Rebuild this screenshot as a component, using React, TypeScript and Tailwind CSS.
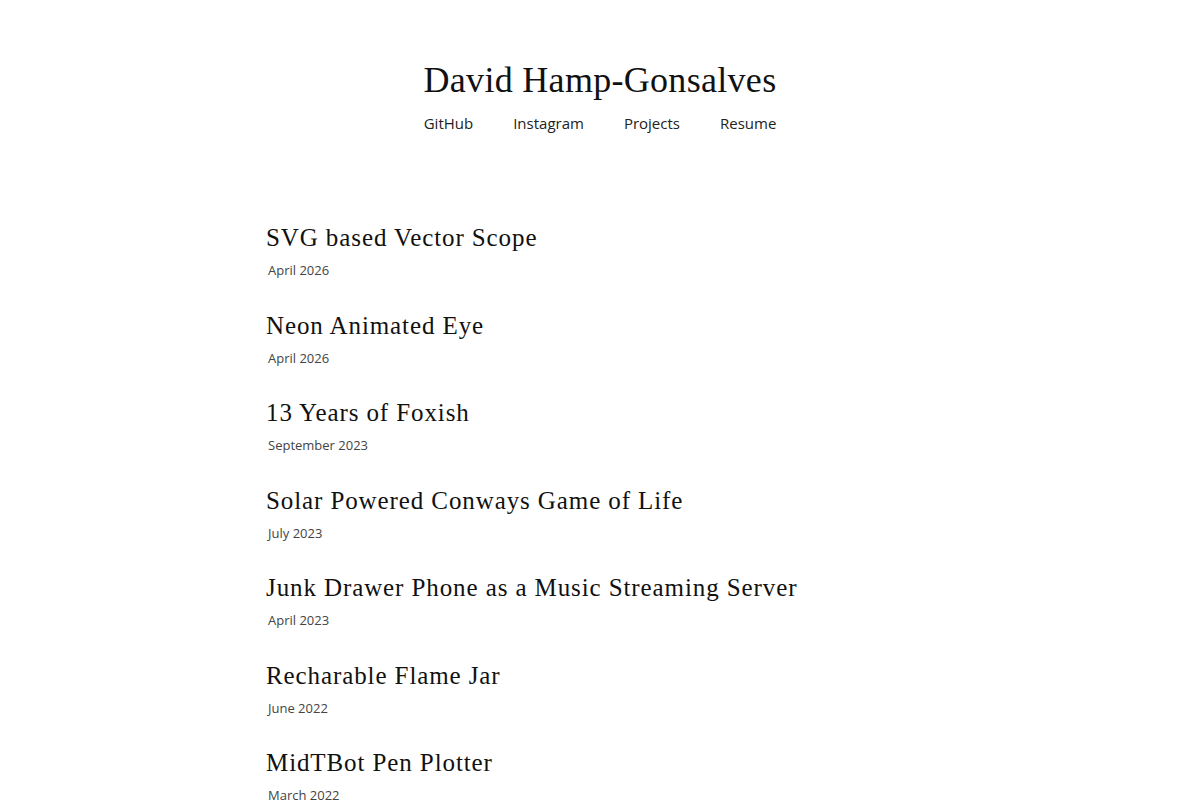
const posts = [
  { title: "SVG based Vector Scope", date: "April 2026" },
  { title: "Neon Animated Eye", date: "April 2026" },
  { title: "13 Years of Foxish", date: "September 2023" },
  { title: "Solar Powered Conways Game of Life", date: "July 2023" },
  { title: "Junk Drawer Phone as a Music Streaming Server", date: "April 2023" },
  { title: "Recharable Flame Jar", date: "June 2022" },
  { title: "MidTBot Pen Plotter", date: "March 2022" },
];

const links = ["GitHub", "Instagram", "Projects", "Resume"];

export default function App() {
  return (
    <div className="min-h-screen bg-white text-[#111]">
      <header className="pt-[58px] flex flex-col items-center">
        <h1 className="font-['Liberation_Serif',serif] text-[36px] leading-[44px] tracking-[0.3px]">
          David Hamp-Gonsalves
        </h1>
        <nav className="mt-[9px] flex gap-10 font-['Open_Sans',sans-serif] text-[15px] leading-6 text-[#222]">
          {links.map((l) => (
            <a key={l} href="#" className="hover:underline">
              {l}
            </a>
          ))}
        </nav>
      </header>

      <main className="mx-auto w-[668px] pt-[87px] flex flex-col gap-[29.5px]">
        {posts.map((p) => (
          <article key={p.title} className="flex flex-col">
            <h2 className="font-['Liberation_Serif',serif] text-[25px] leading-8 tracking-[0.9px]">
              {p.title}
            </h2>
            <span className="mt-[6px] pl-[2px] font-['Open_Sans',sans-serif] text-[13px] leading-5 text-[#444]">
              {p.date}
            </span>
          </article>
        ))}
      </main>
    </div>
  );
}
